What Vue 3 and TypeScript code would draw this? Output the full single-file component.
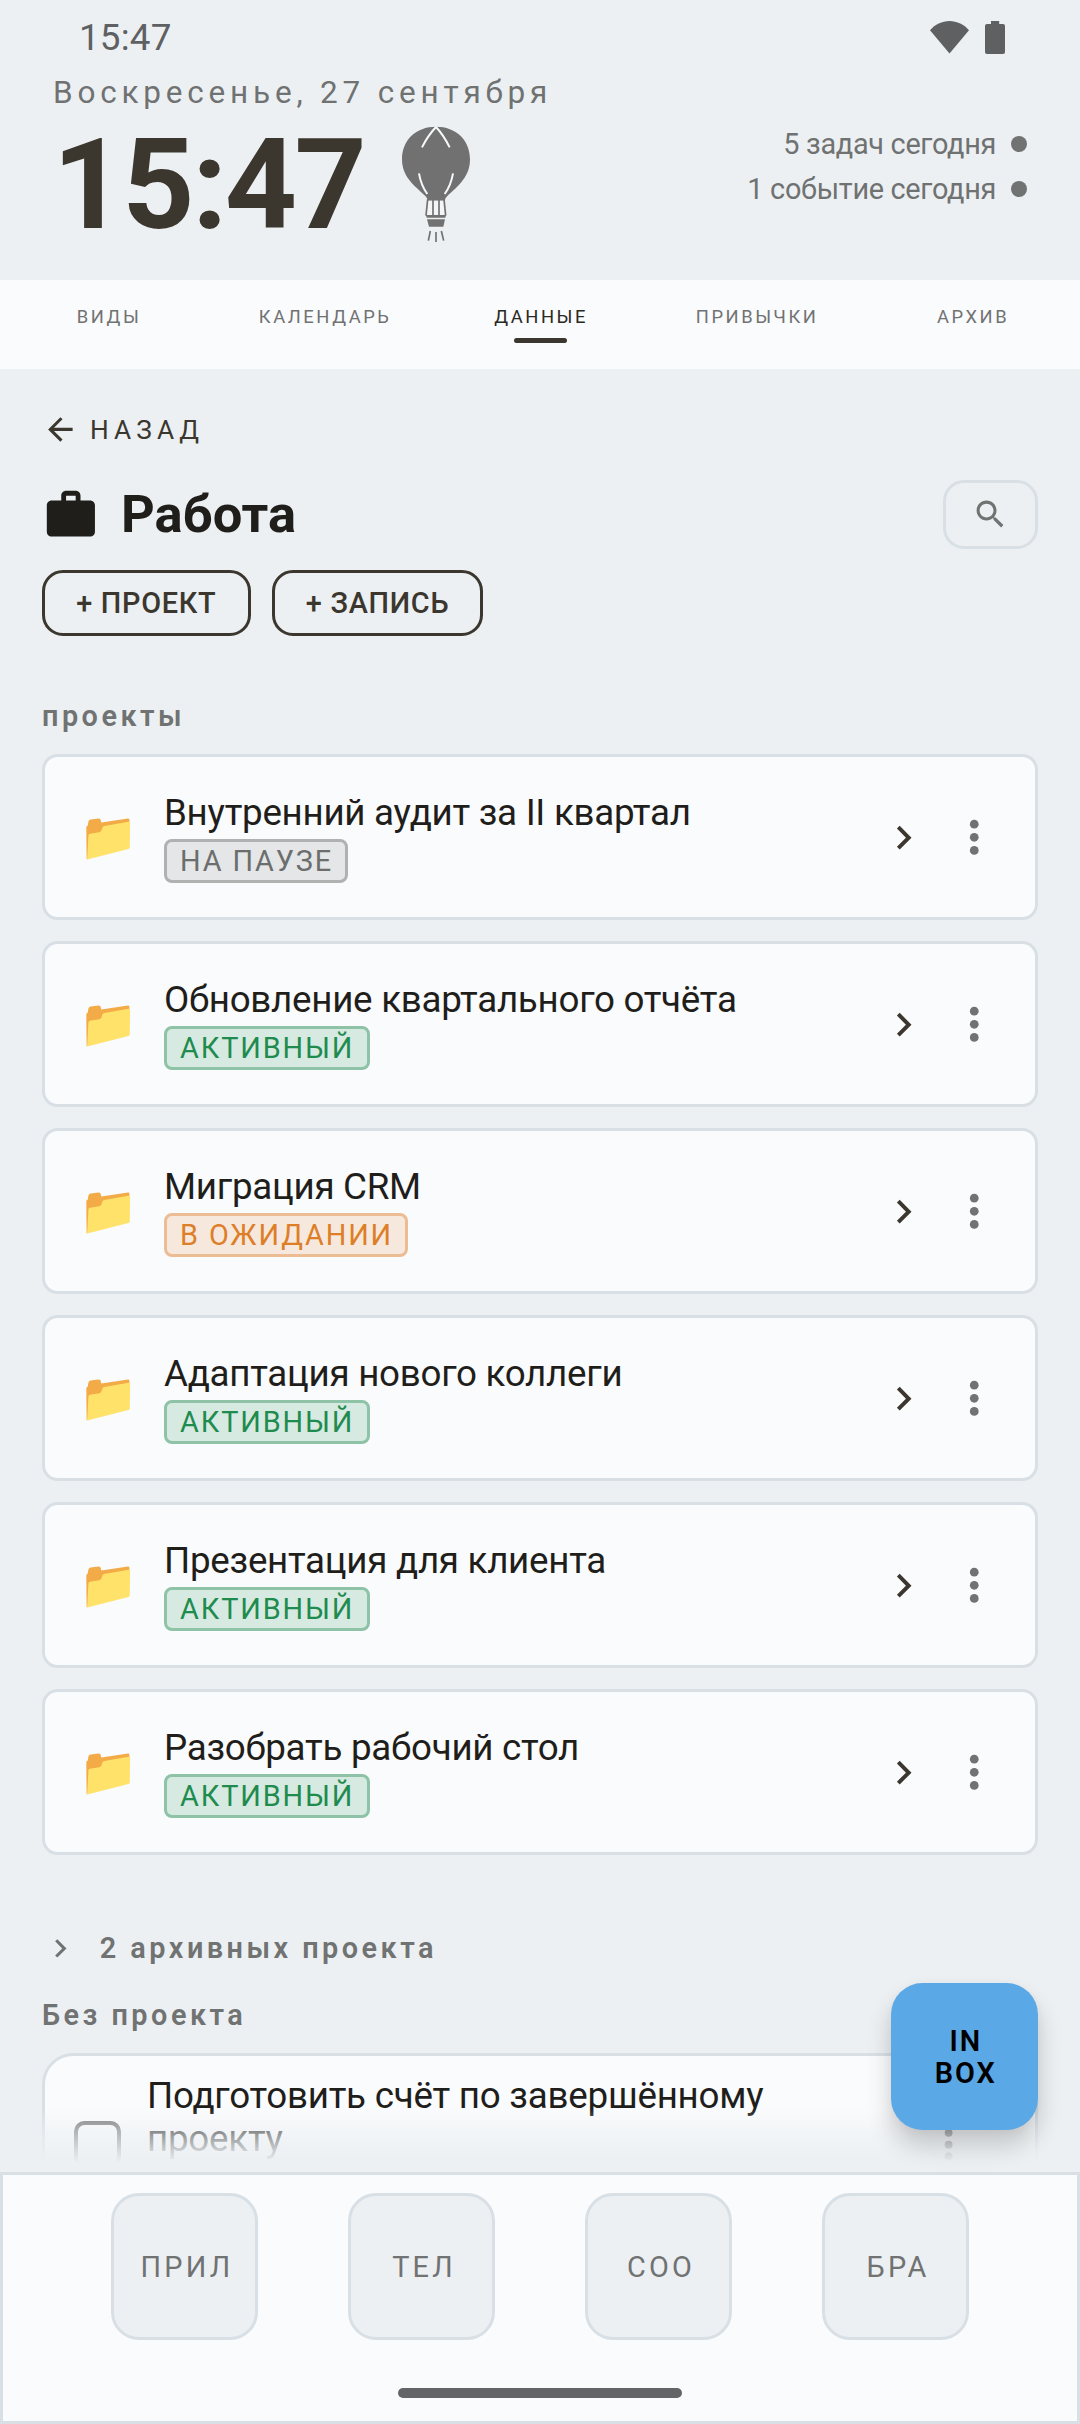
<script setup lang="ts">
type Status = 'paused' | 'active' | 'waiting'

interface Project {
  title: string
  status: Status
}

const statusLabels: Record<Status, string> = {
  paused: 'НА ПАУЗЕ',
  active: 'АКТИВНЫЙ',
  waiting: 'В ОЖИДАНИИ',
}

const tabs: string[] = ['ВИДЫ', 'КАЛЕНДАРЬ', 'ДАННЫЕ', 'ПРИВЫЧКИ', 'АРХИВ']
const activeTab = 'ДАННЫЕ'

const summary: string[] = ['5 задач сегодня', '1 событие сегодня']

const projects: Project[] = [
  { title: 'Внутренний аудит за II квартал', status: 'paused' },
  { title: 'Обновление квартального отчёта', status: 'active' },
  { title: 'Миграция CRM', status: 'waiting' },
  { title: 'Адаптация нового коллеги', status: 'active' },
  { title: 'Презентация для клиента', status: 'active' },
  { title: 'Разобрать рабочий стол', status: 'active' },
]

const dock: string[] = ['ПРИЛ', 'ТЕЛ', 'СОО', 'БРА']
</script>

<template>
  <div class="screen">
    <div class="status-bar">
      <span class="status-time">15:47</span>
      <svg class="status-icons" viewBox="0 0 76 33">
        <path d="M20.5 32.5 1 9.2C6 3.500 13 0 20.500 0S35 3.500 40 9.200z" />
        <path d="M62 0h8.200v3H74a2 2 0 0 1 2 2v26a2 2 0 0 1-2 2H58a2 2 0 0 1-2-2V5a2 2 0 0 1 2-2h4z" />
      </svg>
    </div>

    <header class="header">
      <div class="date">Воскресенье, 27 сентября</div>
      <div class="clock-row">
        <div class="clock">15:47</div>
        <svg class="balloon" viewBox="0 0 330 450">
          <path
            class="solid"
            d="M168 50c-60 0-102 40-102 98 0 52 36 78 70 110 6 6 6 10 6 14h53c0-5 2-9 7-14 33-30 68-58 68-110 0-58-42-98-102-98z"
          />
          <path class="seam" d="M126 112c10-20 26-44 42-61 16 17 31 41 41 61" />
          <path class="seam" d="M117 190c4 24 12 44 25 62M219 190c-4 24-12 44-25 62" />
          <path class="gap" d="M144 272h48l3 42h-54z" />
          <path class="rope" d="M143 268l-5 49M159 270v46M177 270v46M192 268l5 49" />
          <path class="solid" d="M138 315h60l-2 8h-56zM141 328h54l-5 22h-43z" />
          <path class="rope" d="M151 363l-6 29M168 366v30M184 363l7 29" />
        </svg>
        <ul class="summary">
          <li v-for="line in summary" :key="line">
            <span>{{ line }}</span>
            <i class="dot"></i>
          </li>
        </ul>
      </div>
    </header>

    <nav class="tabs">
      <div v-for="tab in tabs" :key="tab" class="tab" :class="{ active: tab === activeTab }">
        <span>{{ tab }}</span>
      </div>
    </nav>

    <main class="content">
      <div class="back">
        <svg class="icon-sm" viewBox="0 0 24 24">
          <path d="M20 11H7.830l5.590-5.590L12 4l-8 8 8 8 1.410-1.410L7.830 13H20v-2z" />
        </svg>
        <span>НАЗАД</span>
      </div>

      <div class="title-row">
        <svg class="icon-work" viewBox="0 0 24 24">
          <path
            d="M20 6h-4V4c0-1.110-.890-2-2-2h-4c-1.110 0-2 .890-2 2v2H4c-1.110 0-2 .890-2 2v11c0 1.110.890 2 2 2h16c1.110 0 2-.890 2-2V8c0-1.110-.890-2-2-2zm-6 0h-4V4h4v2z"
          />
        </svg>
        <h1>Работа</h1>
        <button class="search" type="button">
          <svg class="icon-sm" viewBox="0 0 24 24">
            <path
              d="M15.500 14h-.790l-.280-.270C15.410 12.590 16 11.110 16 9.500 16 5.910 13.090 3 9.500 3S3 5.910 3 9.500 5.910 16 9.500 16c1.610 0 3.090-.590 4.230-1.570l.270.280v.790l5 4.990L20.490 19l-4.990-5zm-6 0C7.010 14 5 11.990 5 9.500S7.010 5 9.500 5 14 7.010 14 9.500 11.990 14 9.500 14z"
            />
          </svg>
        </button>
      </div>

      <div class="actions">
        <button class="action" type="button">+ ПРОЕКТ</button>
        <button class="action" type="button">+ ЗАПИСЬ</button>
      </div>

      <h2 class="section">проекты</h2>

      <div class="projects">
        <article v-for="project in projects" :key="project.title" class="card">
          <svg class="folder" viewBox="0 0 45 42">
            <path
              fill="#f3ab47"
              d="M.3 9.500Q.3 8 1.800 7.600L2.300 4Q2.600 1.800 4.600 1.500L12.600.4Q14.400.2 14.700 2L15.300 4.500 42 .500Q43.200.4 43.400 1.500V6L17 14 3 30 1.500 41.500.6 41z"
            />
            <path
              fill="#ffe26a"
              d="M2.400 17.500Q2.500 16 4 15.700L13.300 14.200Q15 13.900 15.500 12.300L16.300 9.800Q16.800 8.400 18.300 8.100L42.600 3.700Q44.100 3.500 44.100 4.900L43.800 29.200Q43.800 30.600 42.400 31L1.200 41.600z"
            />
          </svg>
          <div class="info">
            <div class="name">{{ project.title }}</div>
            <span class="badge" :class="project.status">{{ statusLabels[project.status] }}</span>
          </div>
          <svg class="chevron" viewBox="0 0 24 24">
            <path d="M10 6 8.590 7.410 13.170 12l-4.580 4.590L10 18l6-6z" />
          </svg>
          <svg class="more" viewBox="0 0 24 24">
            <circle cx="12" cy="6" r="2" />
            <circle cx="12" cy="12" r="2" />
            <circle cx="12" cy="18" r="2" />
          </svg>
        </article>
      </div>

      <div class="archive">
        <svg class="icon-sm" viewBox="0 0 24 24">
          <path d="M10 6 8.590 7.410 13.170 12l-4.580 4.590L10 18l6-6z" />
        </svg>
        <span class="section-text">2 архивных проекта</span>
      </div>

      <h2 class="section loose">Без проекта</h2>

      <article class="task">
        <span class="checkbox"></span>
        <p class="task-title">Подготовить счёт по завершённому проекту</p>
        <svg class="task-more" viewBox="0 0 24 24">
          <circle cx="12" cy="6" r="2" />
          <circle cx="12" cy="12" r="2" />
          <circle cx="12" cy="18" r="2" />
        </svg>
      </article>

      <div class="fade"></div>
      <button class="inbox" type="button"><span>IN</span><span>BOX</span></button>
    </main>

    <footer class="dock">
      <div class="dock-row">
        <button v-for="item in dock" :key="item" class="dock-button" type="button">{{ item }}</button>
      </div>
      <div class="home-pill"></div>
    </footer>
  </div>
</template>

<style>
body {
  margin: 0;
  background: #ecf0f3;
}
</style>

<style scoped>
.screen {
  display: flex;
  flex-direction: column;
  width: 1080px;
  height: 2424px;
  overflow: hidden;
  background: #ecf0f3;
  color: #1f1e1b;
  font-family: Roboto, sans-serif;
  box-sizing: border-box;
}

.screen * {
  box-sizing: border-box;
}

button {
  margin: 0;
  padding: 0;
  background: none;
  border: 0;
  color: inherit;
  font: inherit;
}

h1,
h2,
p,
ul {
  margin: 0;
  padding: 0;
}

svg {
  display: block;
  flex: none;
  fill: currentColor;
}

.status-bar {
  display: flex;
  flex: none;
  align-items: center;
  justify-content: space-between;
  height: 74px;
  padding: 0 75px 0 79px;
  color: #5e6062;
}

.status-time {
  font-size: 36.75px;
  letter-spacing: 0.2px;
}

.status-icons {
  width: 76px;
  height: 33px;
}

.header {
  flex: none;
  height: 206px;
  color: #707272;
}

.date {
  height: 36px;
  padding-left: 53px;
  font-size: 31.5px;
  line-height: 37px;
  letter-spacing: 4.8px;
}

.clock-row {
  display: flex;
  height: 150px;
  padding: 0 53px 0 52.5px;
}

.clock {
  color: #3b372e;
  font-size: 126px;
  font-weight: 700;
  line-height: 150px;
  letter-spacing: -2.6px;
}

.balloon {
  width: 110px;
  height: 150px;
  margin-left: 16px;
}

.balloon .solid {
  fill: #717171;
}

.balloon .seam {
  fill: none;
  stroke: #f6f8f9;
  stroke-width: 6;
}

.balloon .gap {
  fill: #f3f5f6;
}

.balloon .rope {
  fill: none;
  stroke: #717171;
  stroke-width: 5;
}

.summary {
  flex: 1;
  padding-top: 11.6px;
  list-style: none;
}

.summary li {
  display: flex;
  align-items: center;
  justify-content: flex-end;
  gap: 15px;
  height: 45px;
  font-size: 28.875px;
  line-height: 45px;
  letter-spacing: -0.31px;
}

.dot {
  width: 16px;
  height: 16px;
  border-radius: 50%;
  background: #717272;
}

.tabs {
  display: flex;
  flex: none;
  height: 89px;
  background: #fafbfd;
}

.tab {
  display: flex;
  flex: 1;
  flex-direction: column;
  align-items: center;
  padding-top: 25.7px;
  color: #717272;
  font-size: 18.375px;
  line-height: 22px;
  letter-spacing: 2.55px;
}

.tab span {
  padding-left: 2.2px;
}

.tab.active {
  color: #2b2924;
}

.tab.active::after {
  width: 53px;
  height: 5.300px;
  margin-top: 10px;
  border-radius: 2.6px;
  background: #3b372e;
  content: '';
}

.content {
  position: relative;
  flex: none;
  height: 1803px;
  padding: 42.5px 42px 0;
  overflow: hidden;
}

.icon-sm {
  width: 36.75px;
  height: 36.75px;
}

.back {
  display: flex;
  gap: 11.2px;
  height: 37px;
  color: #3b372e;
  font-size: 26.25px;
  line-height: 37px;
  letter-spacing: 5.1px;
}

.back .icon-sm {
  margin-top: -0.6px;
}

.title-row {
  display: flex;
  align-items: center;
  height: 69px;
  margin-top: 31.5px;
}

.icon-work {
  width: 57.75px;
  height: 57.75px;
}

h1 {
  flex: 1;
  padding-left: 21.3px;
  font-size: 52.5px;
  font-weight: 700;
  line-height: 69px;
}

.search {
  display: flex;
  align-items: center;
  justify-content: center;
  width: 95px;
  height: 69px;
  border: 3px solid #d8e0e6;
  border-radius: 21px;
  color: #717272;
}

.actions {
  display: flex;
  gap: 21px;
  margin-top: 21px;
}

.action {
  height: 66px;
  padding: 0 31.2px;
  border: 3px solid #3b372e;
  border-radius: 21px;
  color: #3b372e;
  font-size: 28.875px;
  font-weight: 500;
  line-height: 60px;
  letter-spacing: 0.72px;
}

.section,
.section-text {
  color: #717272;
  font-size: 28.875px;
  font-weight: 600;
  line-height: 34px;
  letter-spacing: 3.47px;
}

.section {
  margin: 63px 0 21px;
}

.projects {
  display: flex;
  flex-direction: column;
  gap: 21px;
}

.card {
  display: flex;
  align-items: center;
  height: 166px;
  padding: 0 34.5px 0 41px;
  border: 3px solid #d8e0e6;
  border-radius: 15.75px;
  background: #fafbfd;
}

.folder {
  width: 45px;
  height: 42px;
  margin-top: 4.6px;
}

.info {
  display: flex;
  flex: 1;
  flex-direction: column;
  align-items: flex-start;
  gap: 5px;
  padding-left: 33px;
}

.name {
  height: 43px;
  font-size: 36.75px;
  line-height: 43px;
  letter-spacing: -0.28px;
}

.badge {
  height: 44px;
  padding: 0 12.3px 0 13px;
  border: 3px solid;
  border-radius: 8px;
  font-size: 28.875px;
  line-height: 38px;
  letter-spacing: 1.88px;
}

.badge.paused {
  border-color: #b0b2b2;
  background: #e4e6e7;
  color: #6c6e6e;
}

.badge.active {
  border-color: #8ec3a7;
  background: #d6eae1;
  color: #1f8b4e;
}

.badge.waiting {
  border-color: #ecbd94;
  background: #f7e8dd;
  color: #dd7f28;
}

.chevron {
  width: 47.25px;
  height: 47.25px;
  margin-top: 1px;
  color: #3b372e;
}

.more {
  width: 52.5px;
  height: 52.5px;
  margin: 1px 0 0 20.6px;
  color: #717272;
}

.archive {
  display: flex;
  align-items: center;
  gap: 21px;
  height: 37px;
  margin-top: 74.5px;
  color: #717272;
}

.section.loose {
  margin: 31.5px 0 21px;
}

.task {
  display: flex;
  align-items: center;
  height: 183px;
  padding: 0 63px 0 29px;
  border: 3px solid #d8e0e6;
  border-radius: 31.5px;
  background: #fafbfd;
}

.checkbox {
  flex: none;
  width: 47px;
  height: 47px;
  border: 4px solid #717272;
  border-radius: 10.5px;
}

.task-title {
  align-self: flex-start;
  width: 660px;
  margin: 17.5px auto 0 26px;
  font-size: 36.75px;
  line-height: 43.2px;
  letter-spacing: -0.24px;
}

.task-more {
  width: 47.25px;
  height: 47.25px;
  color: #717272;
}

.fade {
  position: absolute;
  right: 0;
  bottom: 0;
  left: 0;
  height: 63px;
  background: linear-gradient(
    to bottom,
    rgba(236, 240, 243, 0),
    rgba(236, 240, 243, 0.35) 22%,
    rgba(236, 240, 243, 0.6) 42%,
    rgba(236, 240, 243, 0.84) 66%,
    #ecf0f3 86%
  );
}

.inbox {
  position: absolute;
  right: 42px;
  bottom: 42px;
  display: flex;
  flex-direction: column;
  align-items: center;
  justify-content: center;
  width: 147px;
  height: 147px;
  padding-left: 2.5px;
  border-radius: 31.5px;
  background: #5ba8e6;
  box-shadow:
    0 16px 24px rgba(0, 0, 0, 0.19),
    0 2px 8px rgba(0, 0, 0, 0.04);
  color: #000;
  font-size: 28.875px;
  font-weight: 600;
  line-height: 32px;
  letter-spacing: 1.9px;
}

.dock {
  flex: none;
  height: 252px;
  padding-top: 18px;
  border: 3px solid #d8e0e6;
  background: #fafbfd;
}

.dock-row {
  display: flex;
  justify-content: center;
  gap: 90px;
}

.dock-button {
  width: 147px;
  height: 147px;
  padding-left: 5px;
  border: 3px solid #d8e0e6;
  border-radius: 28px;
  background: #ecf0f3;
  color: #717272;
  font-size: 28.875px;
  letter-spacing: 3.2px;
}

.home-pill {
  width: 284px;
  height: 10px;
  margin: 48px auto 0;
  border-radius: 5px;
  background: #636467;
}
</style>
